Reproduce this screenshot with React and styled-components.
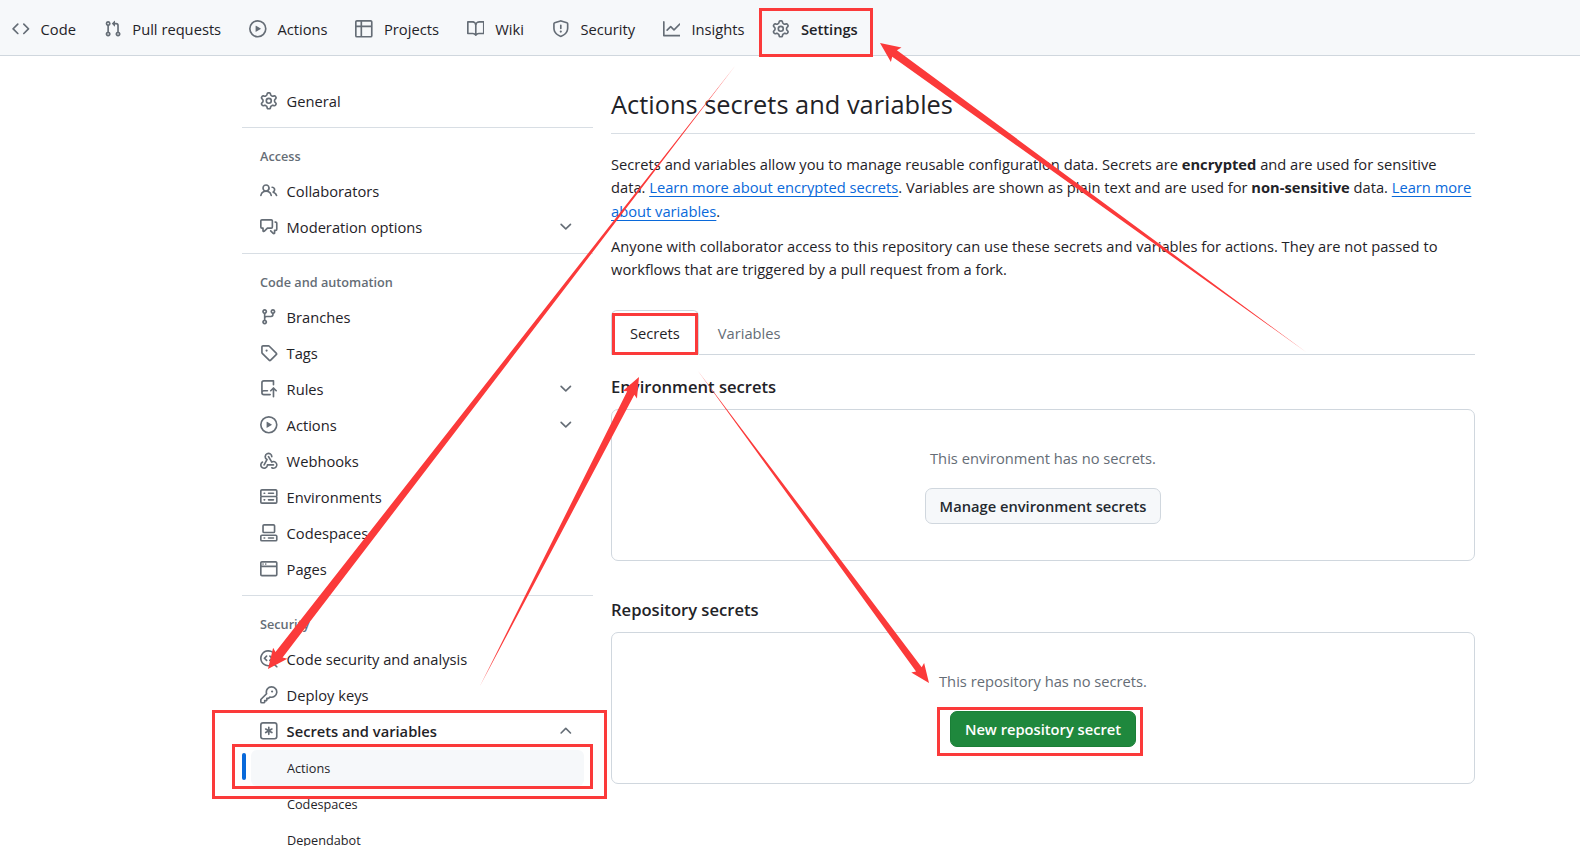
import styled, { createGlobalStyle } from "styled-components";

const GlobalStyle = createGlobalStyle`
  html, body {
    margin: 0;
    overflow: hidden;
    background: #fff;
  }
  body {
    font-family: "Open Sans", "Noto Sans", "Liberation Sans", sans-serif;
    font-size: 14.7px;
    color: #1f2328;
  }
`;

// octicon paths, 16x16 viewBox
const ICONS = {
  code: "m11.28 3.22 4.25 4.25a.75.75 0 0 1 0 1.06l-4.25 4.25a.749.749 0 0 1-1.275-.326.749.749 0 0 1 .215-.734L13.94 8l-3.72-3.72a.749.749 0 0 1 .326-1.275.749.749 0 0 1 .734.215Zm-6.56 0a.751.751 0 0 1 1.042.018.751.751 0 0 1 .018 1.042L2.06 8l3.72 3.72a.749.749 0 0 1-.326 1.275.749.749 0 0 1-.734-.215L.47 8.53a.75.75 0 0 1 0-1.06Z",
  pull: "M1.5 3.25a2.25 2.25 0 1 1 3 2.122v5.256a2.251 2.251 0 1 1-1.5 0V5.372A2.25 2.25 0 0 1 1.5 3.25Zm5.677-.177L9.573.677A.25.25 0 0 1 10 .854V2.5h1A2.5 2.5 0 0 1 13.5 5v5.628a2.251 2.251 0 1 1-1.5 0V5a1 1 0 0 0-1-1h-1v1.646a.25.25 0 0 1-.427.177L7.177 3.427a.25.25 0 0 1 0-.354ZM3.75 2.5a.75.75 0 1 0 0 1.5.75.75 0 0 0 0-1.5Zm0 9.5a.75.75 0 1 0 0 1.5.75.75 0 0 0 0-1.5Zm8.25.75a.75.75 0 1 0 1.5 0 .75.75 0 0 0-1.5 0Z",
  play: "M8 0a8 8 0 1 1 0 16A8 8 0 0 1 8 0ZM1.5 8a6.5 6.5 0 1 0 13 0 6.5 6.5 0 0 0-13 0Zm4.879-2.773 4.264 2.559a.25.25 0 0 1 0 .428l-4.264 2.559A.25.25 0 0 1 6 10.559V5.442a.25.25 0 0 1 .379-.215Z",
  table: "M0 1.75C0 .784.784 0 1.75 0h12.5C15.216 0 16 .784 16 1.75v12.5A1.75 1.75 0 0 1 14.25 16H1.75A1.75 1.75 0 0 1 0 14.25ZM6.5 6.5v8h7.75a.25.25 0 0 0 .25-.25V6.5Zm8-1.5V1.75a.25.25 0 0 0-.25-.25H6.5V5Zm-13 1.5v7.75c0 .138.112.25.25.25H5v-8ZM5 5V1.5H1.75a.25.25 0 0 0-.25.25V5Z",
  book: "M0 1.75A.75.75 0 0 1 .75 1h4.253c1.227 0 2.317.59 3 1.501A3.743 3.743 0 0 1 11.006 1h4.245a.75.75 0 0 1 .75.75v10.5a.75.75 0 0 1-.75.75h-4.507a2.25 2.25 0 0 0-1.591.659l-.622.621a.75.75 0 0 1-1.06 0l-.622-.621A2.25 2.25 0 0 0 5.258 13H.75a.75.75 0 0 1-.75-.75Zm7.251 10.324.004-5.073-.002-2.253A2.25 2.25 0 0 0 5.003 2.5H1.5v9h3.757a3.75 3.75 0 0 1 1.994.574ZM8.755 4.75l-.004 7.322a3.752 3.752 0 0 1 1.992-.572H14.5v-9h-3.495a2.25 2.25 0 0 0-2.25 2.25Z",
  shield: "M7.467.133a1.748 1.748 0 0 1 1.066 0l5.25 1.68A1.75 1.75 0 0 1 15 3.48V7c0 1.566-.32 3.182-1.303 4.682-.983 1.498-2.585 2.813-5.032 3.855a1.697 1.697 0 0 1-1.33 0c-2.447-1.042-4.049-2.357-5.032-3.855C1.32 10.182 1 8.566 1 7V3.48a1.75 1.75 0 0 1 1.217-1.667Zm.61 1.429a.25.25 0 0 0-.153 0l-5.25 1.68a.25.25 0 0 0-.174.238V7c0 1.358.275 2.666 1.057 3.86.784 1.194 2.121 2.34 4.366 3.297a.196.196 0 0 0 .154 0c2.245-.956 3.582-2.104 4.366-3.298C13.225 9.666 13.5 8.36 13.5 7V3.48a.251.251 0 0 0-.174-.237l-5.25-1.68ZM8.75 4.75v3a.75.75 0 0 1-1.5 0v-3a.75.75 0 0 1 1.5 0ZM9 10.5a1 1 0 1 1-2 0 1 1 0 0 1 2 0Z",
  graph: "M1.5 1.75V13.5h13.75a.75.75 0 0 1 0 1.5H.75a.75.75 0 0 1-.75-.75V1.75a.75.75 0 0 1 1.5 0Zm14.28 2.53-5.25 5.25a.75.75 0 0 1-1.06 0L7 7.06 4.28 9.78a.751.751 0 0 1-1.042-.018.751.751 0 0 1-.018-1.042l3.25-3.25a.75.75 0 0 1 1.06 0L10 7.94l4.72-4.72a.751.751 0 0 1 1.042.018.751.751 0 0 1 .018 1.042Z",
  gear: "M8 0a8.2 8.2 0 0 1 .701.031C9.444.095 9.99.645 10.16 1.29l.288 1.107c.018.066.079.158.212.224.231.114.454.243.668.386.123.082.233.09.299.071l1.103-.303c.644-.176 1.392.021 1.82.63.27.385.506.792.704 1.218.315.675.111 1.422-.364 1.891l-.814.806c-.049.048-.098.147-.088.294.016.257.016.515 0 .772-.01.147.038.246.088.294l.814.806c.475.469.679 1.216.364 1.891a7.977 7.977 0 0 1-.704 1.217c-.428.61-1.176.807-1.82.63l-1.102-.302c-.067-.019-.177-.011-.3.071a5.909 5.909 0 0 1-.668.386c-.133.066-.194.158-.211.224l-.29 1.106c-.168.646-.715 1.196-1.458 1.26a8.006 8.006 0 0 1-1.402 0c-.743-.064-1.289-.614-1.458-1.26l-.289-1.106c-.018-.066-.079-.158-.212-.224a5.738 5.738 0 0 1-.668-.386c-.123-.082-.233-.09-.299-.071l-1.103.303c-.644.176-1.392-.021-1.82-.63a8.12 8.12 0 0 1-.704-1.218c-.315-.675-.111-1.422.363-1.891l.815-.806c.05-.048.098-.147.088-.294a6.214 6.214 0 0 1 0-.772c.01-.147-.038-.246-.088-.294l-.815-.806C.635 6.045.431 5.298.746 4.623a7.92 7.92 0 0 1 .704-1.217c.428-.61 1.176-.807 1.82-.63l1.102.302c.067.019.177.011.3-.071.214-.143.437-.272.668-.386.133-.066.194-.158.211-.224l.29-1.106C6.009.645 6.556.095 7.299.03 7.53.01 7.764 0 8 0Zm-.571 1.525c-.036.003-.108.036-.137.146l-.289 1.105c-.147.561-.549.967-.998 1.189-.173.086-.34.183-.5.29-.417.278-.97.423-1.529.27l-1.103-.303c-.109-.03-.175.016-.195.045-.22.312-.412.644-.573.99-.014.031-.021.11.059.19l.815.806c.411.406.562.957.53 1.456a4.709 4.709 0 0 0 0 .582c.032.499-.119 1.05-.53 1.456l-.815.806c-.081.08-.073.159-.059.19.162.346.353.677.573.989.02.03.085.076.195.046l1.102-.303c.56-.153 1.113-.008 1.53.27.161.107.328.204.501.29.447.222.85.629.997 1.189l.289 1.105c.029.109.101.143.137.146a6.6 6.6 0 0 0 1.142 0c.036-.003.108-.036.137-.146l.289-1.105c.147-.561.549-.967.998-1.189.173-.086.34-.183.5-.29.417-.278.97-.423 1.529-.27l1.103.303c.109.029.175-.016.195-.045.22-.313.411-.644.573-.99.014-.031.021-.11-.059-.19l-.815-.806c-.411-.406-.562-.957-.53-1.456a4.709 4.709 0 0 0 0-.582c-.032-.499.119-1.05.53-1.456l.815-.806c.081-.08.073-.159.059-.19a6.464 6.464 0 0 0-.573-.989c-.02-.03-.085-.076-.195-.046l-1.102.303c-.56.153-1.113.008-1.53-.27a4.44 4.44 0 0 0-.501-.29c-.447-.222-.85-.629-.997-1.189l-.289-1.105c-.029-.11-.101-.143-.137-.146a6.6 6.6 0 0 0-1.142 0ZM11 8a3 3 0 1 1-6 0 3 3 0 0 1 6 0ZM9.5 8a1.5 1.5 0 1 0-3.001.001A1.5 1.5 0 0 0 9.5 8Z",
  people: "M2 5.5a3.5 3.5 0 1 1 5.898 2.549 5.508 5.508 0 0 1 3.034 4.084.75.75 0 1 1-1.482.235 4 4 0 0 0-7.9 0 .75.75 0 0 1-1.482-.236A5.507 5.507 0 0 1 3.102 8.05 3.493 3.493 0 0 1 2 5.5ZM11 4a3.001 3.001 0 0 1 2.22 5.018 5.01 5.01 0 0 1 2.56 3.012.749.749 0 0 1-.885.954.752.752 0 0 1-.549-.514 3.507 3.507 0 0 0-2.522-2.372.75.75 0 0 1-.574-.73v-.352a.75.75 0 0 1 .416-.672A1.5 1.5 0 0 0 11 5.5.75.75 0 0 1 11 4Zm-5.5-.5a2 2 0 1 0-.001 3.999A2 2 0 0 0 5.5 3.5Z",
  comments: "M1.75 1h8.5c.966 0 1.75.784 1.75 1.75v5.5A1.75 1.75 0 0 1 10.25 10H7.061l-2.574 2.573A1.458 1.458 0 0 1 2 11.543V10h-.25A1.75 1.75 0 0 1 0 8.25v-5.5C0 1.784.784 1 1.75 1ZM1.5 2.75v5.5c0 .138.112.25.25.25h1a.75.75 0 0 1 .75.75v2.19l2.72-2.72a.749.749 0 0 1 .53-.22h3.5a.25.25 0 0 0 .25-.25v-5.5a.25.25 0 0 0-.25-.25h-8.5a.25.25 0 0 0-.25.25Zm13 2a.25.25 0 0 0-.25-.25h-.5a.75.75 0 0 1 0-1.5h.5c.966 0 1.75.784 1.75 1.75v5.5A1.75 1.75 0 0 1 14.25 12H14v1.543a1.458 1.458 0 0 1-2.487 1.03L9.22 12.28a.749.749 0 0 1 .326-1.275.749.749 0 0 1 .734.215l2.22 2.22v-2.19a.75.75 0 0 1 .75-.75h1a.25.25 0 0 0 .25-.25Z",
  branch: "M9.5 3.25a2.25 2.25 0 1 1 3 2.122V6A2.5 2.5 0 0 1 10 8.5H6a1 1 0 0 0-1 1v1.128a2.251 2.251 0 1 1-1.5 0V5.372a2.25 2.25 0 1 1 1.5 0v1.836A2.493 2.493 0 0 1 6 7h4a1 1 0 0 0 1-1v-.628A2.25 2.25 0 0 1 9.5 3.25Zm-6 0a.75.75 0 1 0 1.5 0 .75.75 0 0 0-1.5 0Zm8.25-.75a.75.75 0 1 0 0 1.5.75.75 0 0 0 0-1.5ZM4.25 12a.75.75 0 1 0 0 1.5.75.75 0 0 0 0-1.5Z",
  tag: "M1 7.775V2.75C1 1.784 1.784 1 2.75 1h5.025c.464 0 .91.184 1.238.513l6.25 6.25a1.75 1.75 0 0 1 0 2.474l-5.026 5.026a1.75 1.75 0 0 1-2.474 0l-6.25-6.25A1.752 1.752 0 0 1 1 7.775Zm1.5 0c0 .066.026.13.073.177l6.25 6.25a.25.25 0 0 0 .354 0l5.025-5.025a.25.25 0 0 0 0-.354l-6.25-6.25a.25.25 0 0 0-.177-.073H2.75a.25.25 0 0 0-.25.25ZM6 5a1 1 0 1 1 0 2 1 1 0 0 1 0-2Z",
  rules: "M1 2.5A2.5 2.5 0 0 1 3.5 0h8.75a.75.75 0 0 1 .75.75v3.5a.75.75 0 0 1-1.5 0V1.5h-8a1 1 0 0 0-1 1v6.708A2.493 2.493 0 0 1 3.5 9h3.25a.75.75 0 0 1 0 1.5H3.5a1 1 0 0 0 0 2h5.75a.75.75 0 0 1 0 1.5H3.5A2.5 2.5 0 0 1 1 11.5Zm13.23 7.79h-.001l-1.224-1.224v6.184a.75.75 0 0 1-1.5 0V9.066L10.28 10.29a.75.75 0 0 1-1.06-1.061l2.505-2.504a.75.75 0 0 1 1.06 0L15.29 9.23a.751.751 0 0 1-.018 1.042.751.751 0 0 1-1.042.018Z",
  webhook: "M5.5 4.25a2.25 2.25 0 0 1 4.5 0 .75.75 0 0 0 1.5 0 3.75 3.75 0 1 0-6.14 2.889l-2.272 4.258a.75.75 0 0 0 1.324.706L7 7.25a.75.75 0 0 0-.309-1.015A2.25 2.25 0 0 1 5.5 4.25ZM7.364 3.607a.75.75 0 0 1 1.03.257l2.608 4.349a3.75 3.75 0 1 1-.628 6.785.75.75 0 0 1 .752-1.299 2.25 2.25 0 1 0-.033-3.88.75.75 0 0 1-1.03-.256L7.107 4.636a.75.75 0 0 1 .257-1.03ZM2.9 8.776A.75.75 0 0 1 2.625 9.8 2.25 2.25 0 1 0 6 11.75a.75.75 0 0 1 .75-.751h5.5a.75.75 0 0 1 0 1.5H7.425a3.751 3.751 0 1 1-5.55-3.998.75.75 0 0 1 1.024.274Z",
  server: "M1.75 1h12.5c.966 0 1.75.784 1.75 1.75v4c0 .372-.116.717-.314 1 .198.283.314.628.314 1v4a1.75 1.75 0 0 1-1.75 1.75H1.75A1.75 1.75 0 0 1 0 12.75v-4c0-.358.109-.707.314-1a1.739 1.739 0 0 1-.314-1v-4C0 1.784.784 1 1.75 1ZM1.5 2.75v4c0 .138.112.25.25.25h12.5a.25.25 0 0 0 .25-.25v-4a.25.25 0 0 0-.25-.25H1.75a.25.25 0 0 0-.25.25Zm.25 5.75a.25.25 0 0 0-.25.25v4c0 .138.112.25.25.25h12.5a.25.25 0 0 0 .25-.25v-4a.25.25 0 0 0-.25-.25ZM7 4.75A.75.75 0 0 1 7.75 4h4.5a.75.75 0 0 1 0 1.5h-4.5A.75.75 0 0 1 7 4.75ZM7.75 10h4.5a.75.75 0 0 1 0 1.5h-4.5a.75.75 0 0 1 0-1.5ZM3 4.75A.75.75 0 0 1 3.75 4h.5a.75.75 0 0 1 0 1.5h-.5A.75.75 0 0 1 3 4.75ZM3.75 10h.5a.75.75 0 0 1 0 1.5h-.5a.75.75 0 0 1 0-1.5Z",
  codespaces: "M0 11.25c0-.966.784-1.75 1.75-1.75h12.5c.966 0 1.75.784 1.75 1.75v3A1.75 1.75 0 0 1 14.25 16H1.75A1.75 1.75 0 0 1 0 14.25Zm2-9.5C2 .784 2.784 0 3.75 0h8.5C13.216 0 14 .784 14 1.75v5a1.75 1.75 0 0 1-1.75 1.75h-8.5A1.75 1.75 0 0 1 2 6.75Zm1.75-.25a.25.25 0 0 0-.25.25v5c0 .138.112.25.25.25h8.5a.25.25 0 0 0 .25-.25v-5a.25.25 0 0 0-.25-.25Zm-2 9.5a.25.25 0 0 0-.25.25v3c0 .138.112.25.25.25h12.5a.25.25 0 0 0 .25-.25v-3a.25.25 0 0 0-.25-.25ZM7 12.75a.75.75 0 0 1 .75-.75h4.5a.75.75 0 0 1 0 1.5h-4.5a.75.75 0 0 1-.75-.75Zm-4 0a.75.75 0 0 1 .75-.75h.5a.75.75 0 0 1 0 1.5h-.5a.75.75 0 0 1-.75-.75Z",
  browser: "M0 2.75C0 1.784.784 1 1.75 1h12.5c.966 0 1.75.784 1.75 1.75v10.5A1.75 1.75 0 0 1 14.25 15H1.75A1.75 1.75 0 0 1 0 13.25ZM14.5 6.5h-13v6.75c0 .138.112.25.25.25h12.5a.25.25 0 0 0 .25-.25Zm-13-1.5h13V2.75a.25.25 0 0 0-.25-.25H1.75a.25.25 0 0 0-.25.25ZM2 3.75a.75.75 0 1 1 1.5 0 .75.75 0 0 1-1.5 0Zm2.5 0a.75.75 0 1 1 1.5 0 .75.75 0 0 1-1.5 0Z",
  codescan: "M8.47 4.97a.75.75 0 0 0 0 1.06L9.94 7.5 8.47 8.97a.75.75 0 1 0 1.06 1.06l2-2a.75.75 0 0 0 0-1.06l-2-2a.75.75 0 0 0-1.06 0ZM6.53 6.03a.75.75 0 0 0-1.06-1.06l-2 2a.75.75 0 0 0 0 1.06l2 2a.75.75 0 1 0 1.06-1.06L5.06 7.5l1.47-1.47ZM12.246 13.307a7.501 7.501 0 1 1 1.06-1.06l2.474 2.473a.749.749 0 0 1-.326 1.275.749.749 0 0 1-.734-.215ZM1.5 7.5a6.002 6.002 0 0 0 3.608 5.504 6.002 6.002 0 0 0 6.486-1.117.75.75 0 0 1 .292-.293A6 6 0 1 0 1.5 7.5Z",
  key: "M10.5 0a5.499 5.499 0 1 1-1.288 10.848l-.932.932a.749.749 0 0 1-.53.22H7v.75a.749.749 0 0 1-.22.53l-.5.5a.749.749 0 0 1-.53.22H5v.75a.749.749 0 0 1-.22.53l-.5.5a.749.749 0 0 1-.53.22h-2A1.75 1.75 0 0 1 0 14.25v-2c0-.199.079-.389.22-.53l4.932-4.932A5.5 5.5 0 0 1 10.5 0Zm-4 5.5c-.001.431.069.86.205 1.269a.75.75 0 0 1-.181.768L1.5 12.56v1.69c0 .138.112.25.25.25h1.69l.06-.06v-1.19a.75.75 0 0 1 .75-.75h1.19l.06-.06v-1.19a.75.75 0 0 1 .75-.75h1.19l1.023-1.025a.75.75 0 0 1 .768-.18A4 4 0 1 0 6.5 5.5ZM11 6a1 1 0 1 1 0-2 1 1 0 0 1 0 2Z",
  asterisk: "M0 2.75A2.75 2.75 0 0 1 2.75 0h10.5A2.75 2.75 0 0 1 16 2.75v10.5A2.75 2.75 0 0 1 13.25 16H2.75A2.75 2.75 0 0 1 0 13.25ZM2.75 1.5c-.69 0-1.25.56-1.25 1.25v10.5c0 .69.56 1.25 1.25 1.25h10.5c.69 0 1.25-.56 1.25-1.25V2.75c0-.69-.56-1.25-1.25-1.25ZM8 4a.75.75 0 0 1 .75.75V6.7l1.69-.975a.75.75 0 0 1 .75 1.3L9.5 8l1.69.976a.75.75 0 0 1-.75 1.298L8.75 9.3v1.951a.75.75 0 0 1-1.5 0V9.299l-1.69.976a.75.75 0 0 1-.75-1.3L6.5 8l-1.69-.975a.75.75 0 0 1 .75-1.3l1.69.976V4.75A.75.75 0 0 1 8 4Z",
  chevronDown: "M12.78 5.22a.749.749 0 0 1 0 1.06l-4.25 4.25a.749.749 0 0 1-1.06 0L3.22 6.28a.749.749 0 1 1 1.06-1.06L8 8.939l3.72-3.719a.749.749 0 0 1 1.06 0Z",
  chevronUp: "M3.22 10.53a.749.749 0 0 1 0-1.06l4.25-4.25a.749.749 0 0 1 1.06 0l4.25 4.25a.749.749 0 1 1-1.06 1.06L8 6.811 4.28 10.53a.749.749 0 0 1-1.06 0Z",
};

const Page = styled.div`
  position: relative;
  width: 1580px;
  height: 846px;
  overflow: hidden;
`;

const RepoNav = styled.nav`
  display: flex;
  height: 55px;
  padding-left: 12px;
  gap: 27.8px;
  background: #f6f8fa;
  border-bottom: 1px solid #d0d7de;
`;

const NavItem = styled.a`
  position: relative;
  display: flex;
  align-items: center;
  gap: 11px;
  height: 60px;
  margin-top: -1px;
  color: #1f2328;
  font-weight: ${(p) => (p.$active ? 600 : 400)};

  ${(p) =>
    p.$active &&
    `&::after {
      content: "";
      position: absolute;
      left: -8px;
      right: -14px;
      bottom: 2px;
      height: 2px;
      background: #fd8c73;
    }`}
`;

const Glyph = styled.svg`
  flex: none;
  width: 17.6px;
  height: 17.6px;
  fill: ${(p) => p.$color || "#656d76"};
`;

const Layout = styled.div`
  display: flex;
  padding-left: 242px;
  gap: 17px;
`;

const Sidebar = styled.aside`
  flex: none;
  width: 352px;
  padding-top: 27px;
`;

const SideRow = styled.a`
  display: flex;
  align-items: center;
  gap: 9px;
  height: 36px;
  padding: 0 19px 0 18px;
  color: #1f2328;
  font-weight: ${(p) => (p.$bold ? 600 : 400)};
`;

const RowLabel = styled.span`
  flex: 1;
  white-space: nowrap;
`;

const SideDivider = styled.div`
  height: 1px;
  margin: 8px 1px 0 0;
  background: #d8dee4;
`;

const GroupTitle = styled.h3`
  margin: 0;
  padding: 17px 18px 6px;
  font-size: 12.7px;
  line-height: 22px;
  font-weight: 600;
  color: #656d76;
`;

const SubRow = styled.a`
  display: flex;
  align-items: center;
  height: 36px;
  margin: ${(p) => (p.$current ? "1px 10px 0 9px" : "0")};
  padding-left: ${(p) => (p.$current ? "36px" : "45px")};
  border-radius: 6px;
  font-size: 12.7px;
  color: #1f2328;
  background: ${(p) => (p.$current ? "#f6f8fa" : "transparent")};
`;

const CurrentMark = styled.span`
  position: absolute;
  left: 242px;
  top: 753px;
  width: 4px;
  height: 27px;
  border-radius: 6px;
  background: #0969da;
`;

const Main = styled.main`
  flex: none;
  width: 864px;
  padding-top: 29px;
`;

const Title = styled.h1`
  margin: 0;
  padding-bottom: 9px;
  font-size: 25.4px;
  line-height: 39px;
  font-weight: 400;
  border-bottom: 1px solid #d8dee4;
`;

const Paragraph = styled.p`
  margin: ${(p) => p.$top || "12px"} 0 0;
  line-height: 23.3px;
`;

const Link = styled.a`
  color: #0969da;
  text-decoration: underline;
  text-underline-offset: 3px;
`;

const TabBar = styled.div`
  display: flex;
  height: 44px;
  margin-top: 29px;
  border-bottom: 1px solid #d0d7de;
`;

const Tab = styled.a`
  display: flex;
  align-items: center;
  height: 45px;
  padding: 0 18px;
  box-sizing: border-box;
  color: ${(p) => (p.$active ? "#1f2328" : "#656d76")};
  background: ${(p) => (p.$active ? "#fff" : "transparent")};
  border: 1px solid ${(p) => (p.$active ? "#d0d7de" : "transparent")};
  border-bottom-color: ${(p) => (p.$active ? "#fff" : "transparent")};
  border-radius: 6px 6px 0 0;
`;

const SectionTitle = styled.h2`
  margin: ${(p) => p.$top} 0 0;
  font-size: 16.6px;
  line-height: 24px;
  font-weight: 600;
`;

const BlankBox = styled.div`
  display: flex;
  flex-direction: column;
  align-items: center;
  height: 152px;
  box-sizing: border-box;
  margin-top: 10px;
  padding-top: 37px;
  border: 1px solid #d0d7de;
  border-radius: 7px;
`;

const BlankText = styled.p`
  margin: 0;
  line-height: 23px;
  color: #656d76;
`;

const Button = styled.a`
  display: flex;
  align-items: center;
  height: 36px;
  box-sizing: border-box;
  margin-top: 18px;
  padding: 0 14px;
  font-weight: 600;
  border-radius: 7px;
  color: ${(p) => (p.$primary ? "#fff" : "#24292f")};
  background: ${(p) => (p.$primary ? "#1f883d" : "#f6f8fa")};
  border: 1px solid ${(p) => (p.$primary ? "#1a7f37" : "#d0d7de")};
`;

const Markup = styled.svg`
  position: absolute;
  inset: 0;
  width: 1580px;
  height: 846px;
  pointer-events: none;
`;

const MarkBox = styled.rect`
  fill: none;
  stroke: #fb3a3a;
  stroke-width: 3px;
`;

const MarkArrow = styled.polygon`
  fill: #fb3a3a;
`;

// tapered annotation arrow: thin at the tail, thick at the neck, then a barbed head
function arrowPoints([x1, y1], [x2, y2], neck = 4, head = 8.5, headLen = 18) {
  const len = Math.hypot(x2 - x1, y2 - y1);
  const ux = (x2 - x1) / len;
  const uy = (y2 - y1) / len;
  const nx = -uy;
  const ny = ux;
  const bx = x2 - ux * headLen;
  const by = y2 - uy * headLen;
  const pts = [
    [x1, y1],
    [bx + nx * neck, by + ny * neck],
    [bx - ux * 2 + nx * head, by - uy * 2 + ny * head],
    [x2, y2],
    [bx - ux * 2 - nx * head, by - uy * 2 - ny * head],
    [bx - nx * neck, by - ny * neck],
  ];
  return pts.map((p) => p.join(",")).join(" ");
}

const Icon = ({ name, color }) => (
  <Glyph viewBox="0 0 16 16" $color={color}>
    <path fillRule="evenodd" d={ICONS[name]} />
  </Glyph>
);

const NAV = [
  ["code", "Code"],
  ["pull", "Pull requests"],
  ["play", "Actions"],
  ["table", "Projects"],
  ["book", "Wiki"],
  ["shield", "Security"],
  ["graph", "Insights"],
  ["gear", "Settings"],
];

const Row = ({ icon, label, chevron, bold }) => (
  <SideRow $bold={bold}>
    <Icon name={icon} />
    <RowLabel>{label}</RowLabel>
    {chevron && <Icon name={chevron} />}
  </SideRow>
);

function App() {
  return (
    <Page>
      <GlobalStyle />
      <RepoNav>
        {NAV.map(([icon, label]) => (
          <NavItem key={label} $active={label === "Settings"}>
            <Icon name={icon} />
            {label}
          </NavItem>
        ))}
      </RepoNav>

      <Layout>
        <Sidebar>
          <Row icon="gear" label="General" />
          <SideDivider />
          <GroupTitle>Access</GroupTitle>
          <Row icon="people" label="Collaborators" />
          <Row icon="comments" label="Moderation options" chevron="chevronDown" />
          <SideDivider />
          <GroupTitle>Code and automation</GroupTitle>
          <Row icon="branch" label="Branches" />
          <Row icon="tag" label="Tags" />
          <Row icon="rules" label="Rules" chevron="chevronDown" />
          <Row icon="play" label="Actions" chevron="chevronDown" />
          <Row icon="webhook" label="Webhooks" />
          <Row icon="server" label="Environments" />
          <Row icon="codespaces" label="Codespaces" />
          <Row icon="browser" label="Pages" />
          <SideDivider />
          <GroupTitle>Security</GroupTitle>
          <Row icon="codescan" label="Code security and analysis" />
          <Row icon="key" label="Deploy keys" />
          <Row icon="asterisk" label="Secrets and variables" chevron="chevronUp" bold />
          <SubRow $current>Actions</SubRow>
          <SubRow>Codespaces</SubRow>
          <SubRow>Dependabot</SubRow>
        </Sidebar>

        <Main>
          <Title>Actions secrets and variables</Title>
          <Paragraph $top="19px">
            Secrets and variables allow you to manage reusable configuration data. Secrets are{" "}
            <strong>encrypted</strong> and are used for sensitive
            <br />
            data. <Link>Learn more about encrypted secrets</Link>. Variables are shown as plain text
            and are used for <strong>non-sensitive</strong> data. <Link>Learn more about variables</Link>.
          </Paragraph>
          <Paragraph>
            Anyone with collaborator access to this repository can use these secrets and variables
            for actions. They are not passed to workflows that are triggered by a pull request from
            a fork.
          </Paragraph>

          <TabBar>
            <Tab $active>Secrets</Tab>
            <Tab>Variables</Tab>
          </TabBar>

          <SectionTitle $top="20px">Environment secrets</SectionTitle>
          <BlankBox>
            <BlankText>This environment has no secrets.</BlankText>
            <Button>Manage environment secrets</Button>
          </BlankBox>

          <SectionTitle $top="37px">Repository secrets</SectionTitle>
          <BlankBox>
            <BlankText>This repository has no secrets.</BlankText>
            <Button $primary>New repository secret</Button>
          </BlankBox>
        </Main>
      </Layout>

      <CurrentMark />

      <Markup viewBox="0 0 1580 846">
        <MarkBox x="760.5" y="9.5" width="111" height="46" />
        <MarkBox x="213.5" y="711.5" width="392" height="86" />
        <MarkBox x="233.5" y="745.5" width="358" height="42" />
        <MarkBox x="613.5" y="314.5" width="83" height="39" />
        <MarkBox x="938.5" y="708.5" width="203" height="46" />
        <MarkArrow points={arrowPoints([1306, 352], [880, 43], 4, 9, 18)} />
        <MarkArrow points={arrowPoints([735, 66], [268, 669], 4.5, 9, 18)} />
        <MarkArrow points={arrowPoints([480, 686], [639, 377], 4, 8, 18)} />
        <MarkArrow points={arrowPoints([698, 371], [929, 683], 3.5, 8, 17)} />
      </Markup>
    </Page>
  );
}

export default App;
